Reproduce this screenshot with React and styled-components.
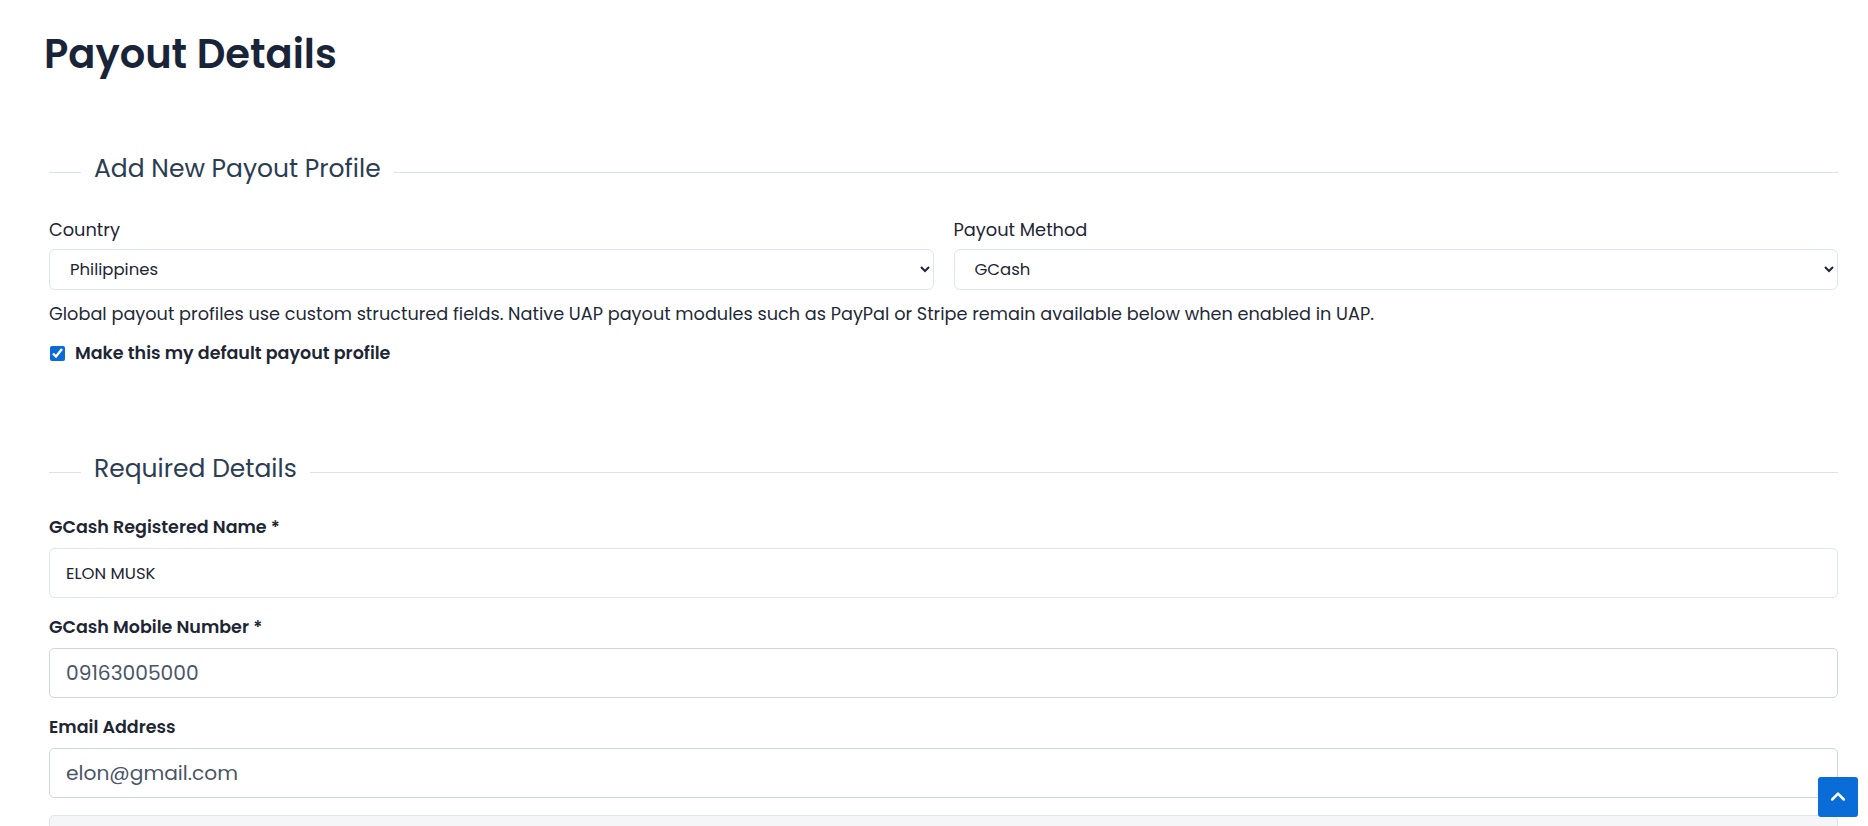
import React from 'react';
import styled, { createGlobalStyle } from 'styled-components';

const GlobalStyle = createGlobalStyle`
  body {
    margin: 0;
    background: #ffffff;
    font-family: "Poppins", Inter, "Open Sans", sans-serif;
    color: #1e2533;
  }
  * { box-sizing: border-box; }
`;

const App = () => {
  return (
    <Page>
      <GlobalStyle />
      <Title>Payout Details</Title>

      <Section $top="78px">
        <SectionHead>Add New Payout Profile</SectionHead>
        <TwoCols>
          <div>
            <FieldLabel>Country</FieldLabel>
            <Select defaultValue="PH">
              <option value="PH">Philippines</option>
            </Select>
          </div>
          <div>
            <FieldLabel>Payout Method</FieldLabel>
            <Select defaultValue="gcash">
              <option value="gcash">GCash</option>
            </Select>
          </div>
        </TwoCols>
        <Help>
          Global payout profiles use custom structured fields. Native UAP payout modules such as PayPal or Stripe remain available below when enabled in UAP.
        </Help>
        <CheckRow>
          <Checkbox type="checkbox" defaultChecked />
          <span>Make this my default payout profile</span>
        </CheckRow>
      </Section>

      <Section $top="89px">
        <SectionHead>Required Details</SectionHead>
        <Fields>
          <Group>
            <StrongLabel>GCash Registered Name *</StrongLabel>
            <Input $variant="soft" defaultValue="ELON MUSK" />
          </Group>
          <Group>
            <StrongLabel>GCash Mobile Number *</StrongLabel>
            <Input defaultValue="09163005000" />
          </Group>
          <Group>
            <StrongLabel>Email Address</StrongLabel>
            <Input defaultValue="elon@gmail.com" />
          </Group>
          <InfoBox />
        </Fields>
      </Section>

      <ScrollTop aria-label="Back to top">
        <svg width="20" height="20" viewBox="0 0 24 24" fill="none" stroke="#fff" strokeWidth="3" strokeLinecap="round" strokeLinejoin="round">
          <path d="M5 15l7-7 7 7" />
        </svg>
      </ScrollTop>
    </Page>
  );
};

export default App;

// Styled components
const Page = styled.div`
  padding: 33px 30px 0 49px;
  height: 826px;
  overflow: hidden;
`;

const Title = styled.h1`
  margin: 0 0 0 -5px;
  font-size: 40px;
  line-height: 43px;
  font-weight: 600;
  color: #1a2438;
`;

const Section = styled.section`
  margin-top: ${props => props.$top};
`;

const SectionHead = styled.h2`
  display: flex;
  align-items: center;
  gap: 13px;
  margin: 0;
  font-size: 25px;
  line-height: 29px;
  font-weight: 400;
  color: #2b3d52;

  &::before,
  &::after {
    content: '';
    height: 1px;
    background: #dee2e6;
    margin-top: 8px;
  }
  &::before { width: 32px; }
  &::after { flex: 1; }
`;

const TwoCols = styled.div`
  display: grid;
  grid-template-columns: 1fr 1fr;
  gap: 20px;
  margin-top: 34px;
`;

const FieldLabel = styled.label`
  display: block;
  font-size: 17.8px;
  line-height: 25px;
  color: #1e2533;
  margin-bottom: 7px;
`;

const Select = styled.select`
  width: 100%;
  height: 41px;
  padding: 0 8px 0 16px;
  border: 1px solid #dce6f4;
  border-radius: 6px;
  background: #fff;
  font-family: inherit;
  font-size: 16.5px;
  color: #1e2533;
`;

const Help = styled.p`
  margin: 11px 0 0;
  font-size: 17.7px;
  line-height: 25px;
  color: #1f2937;
`;

const CheckRow = styled.label`
  display: flex;
  align-items: center;
  gap: 10px;
  margin-top: 15px;
  font-size: 17.5px;
  line-height: 24px;
  font-weight: 600;
  color: #1e2533;
`;

const Checkbox = styled.input`
  width: 15px;
  height: 15px;
  margin: 0 0 0 1px;
  accent-color: #0b6bd6;
`;

const Fields = styled.div`
  margin-top: 32px;
`;

const Group = styled.div`
  margin-bottom: 17px;
`;

const StrongLabel = styled.label`
  display: block;
  font-size: 17.5px;
  line-height: 25px;
  font-weight: 600;
  color: #1e2533;
  margin-bottom: 8px;
`;

const Input = styled.input`
  display: block;
  width: 100%;
  height: 50px;
  padding: 0 16px;
  border: 1px solid ${props => (props.$variant === 'soft' ? '#dce6f4' : '#d1d5dd')};
  border-radius: 5px;
  background: #fff;
  font-family: inherit;
  font-size: ${props => (props.$variant === 'soft' ? '16.5px' : '20.2px')};
  color: ${props => (props.$variant === 'soft' ? '#1e2533' : '#4a5568')};
  outline: none;
`;

const InfoBox = styled.div`
  height: 60px;
  border: 1px solid #e1e4e8;
  border-radius: 5px;
  background: #f5f6f7;
`;

const ScrollTop = styled.button`
  position: fixed;
  right: 10px;
  bottom: 9px;
  width: 40px;
  height: 40px;
  border: none;
  border-radius: 3px;
  background: #0a6cd6;
  display: flex;
  align-items: center;
  justify-content: center;
  padding: 0;
  cursor: pointer;
`;
